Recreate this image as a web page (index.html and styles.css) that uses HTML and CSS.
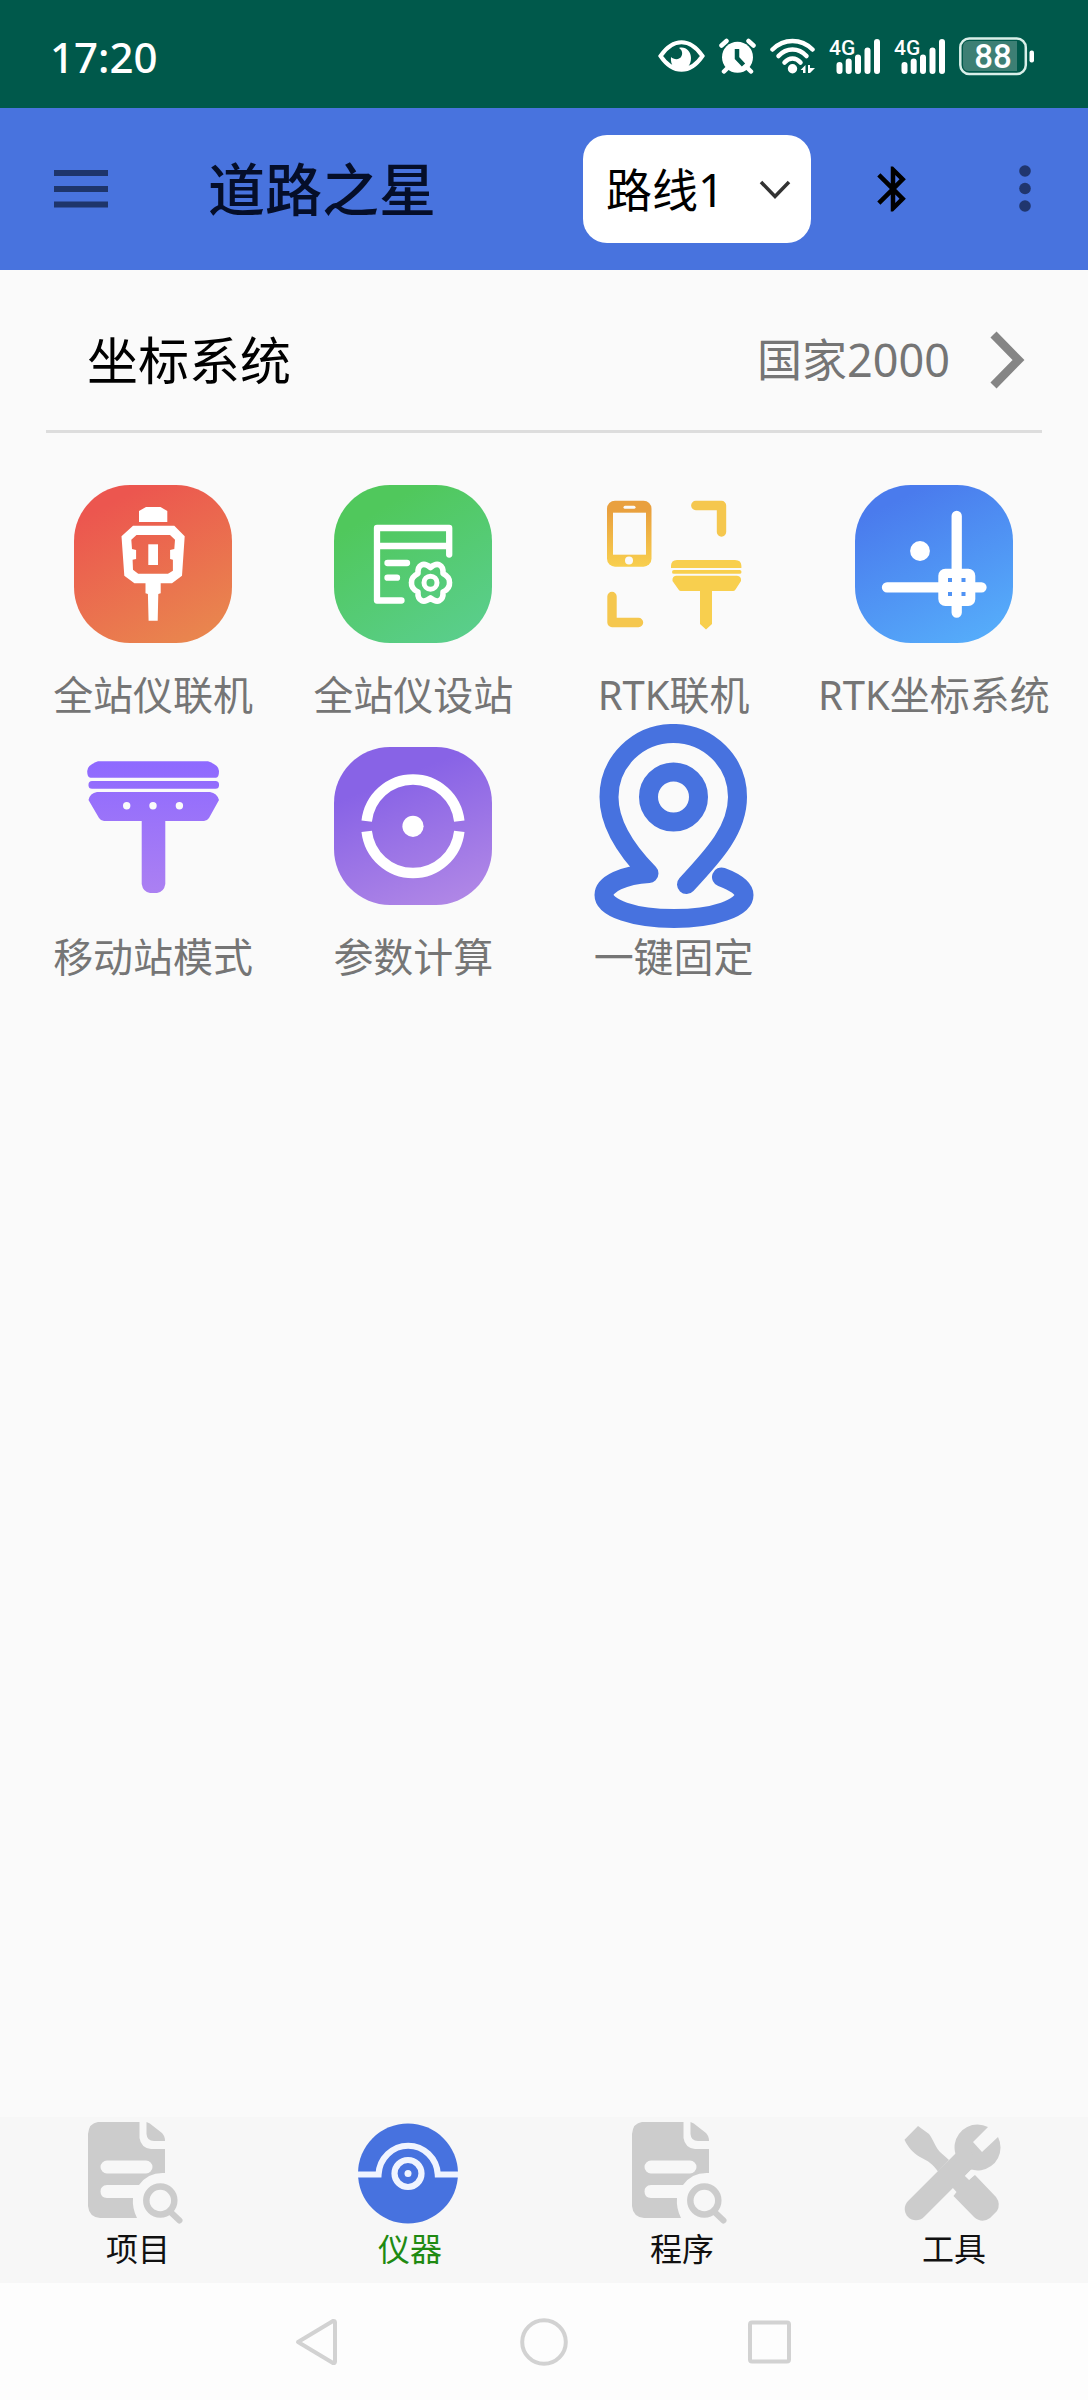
FILE: index.html
```html
<!DOCTYPE html>
<html lang="zh-CN">
<head>
  <meta charset="UTF-8" />
  <title>道路之星</title>
  <meta name="viewport" content="width=device-width, initial-scale=1.0" />
  <link rel="stylesheet" href="styles.css">
</head>
<body>

<!-- Status bar -->
<div class="status-bar">
  <span class="clock">17:20</span>
  <div class="status-icons">
    <svg width="47" height="40" viewBox="0 0 47 40">
      <path d="M2.5 20C8 12 15 6.300 23.500 6.300S39 12 44.500 20C39 28 32 33.700 23.500 33.700S8 28 2.500 20Z" fill="none" stroke="#fff" stroke-width="4"/>
      <path d="M21 12C27 10 33 15 33 22C33 29 29 34 23 34C17 34 12 29 13 21C16 24 22 24 23.500 20C25 17 24 14 21 12Z" fill="#fff"/>
    </svg>
    <svg width="37" height="40" viewBox="0 0 37 40">
      <circle cx="18.500" cy="21.300" r="15.500" fill="#fff"/>
      <path d="M2.500 9.500L7.500 5M29.500 5L34.500 9.500M5 35.500L9 31.500M32 35.500L28 31.500" fill="none" stroke="#fff" stroke-width="4.500" stroke-linecap="round"/>
      <path d="M18 13V22L24.500 29" fill="none" stroke="#00594b" stroke-width="4.500"/>
    </svg>
    <svg width="45" height="40" viewBox="0 0 45 40">
      <g fill="none" stroke="#fff" stroke-width="4.500" stroke-linecap="round">
        <path d="M2.500 13.500Q11 5 22.500 5T42.500 13.500"/>
        <path d="M8.500 20Q14.500 13.500 22.500 13.500T36.500 20"/>
        <path d="M14.500 26.500Q18 22.500 22.500 22.500T30.500 26.500"/>
      </g>
      <circle cx="22.500" cy="32.700" r="4.700" fill="#fff"/>
      <path d="M30.500 34L35.500 29V37H33V34ZM38 29H40V32L45 32L40 37H38Z" fill="#fff"/>
    </svg>
    <svg width="51" height="40" viewBox="0 0 51 40">
      <text class="net-text" x="0" y="19">4G</text>
      <path class="bars" d="M10.500 29V35M19.700 25.500V35M29 21.500V35M38.500 14.500V35M48 6V35"/>
    </svg>
    <svg width="51" height="40" viewBox="0 0 51 40">
      <text class="net-text" x="0" y="19">4G</text>
      <path class="bars" d="M10.500 29V35M19.700 25.500V35M29 21.500V35M38.500 14.500V35M48 6V35"/>
    </svg>
    <svg width="75" height="40" viewBox="0 0 75 40">
      <path d="M10 5H58V35H10Q4 35 4 29V11Q4 5 10 5Z" fill="#3d7f74"/>
      <rect x="1.300" y="2.500" width="65.500" height="35.500" rx="9" fill="none" stroke="#d9efe9" stroke-width="2.500"/>
      <rect x="70.500" y="14.500" width="4.500" height="12" rx="2" fill="#fff"/>
      <text class="battery-text" x="34" y="32" text-anchor="middle">88</text>
    </svg>
  </div>
</div>

<!-- App bar -->
<header class="app-bar">
  <button class="icon-btn" aria-label="菜单">
    <svg width="54" height="38" viewBox="0 0 54 38">
      <path d="M0 3H54M0 19H54M0 34.500H54" stroke="#1e356b" stroke-width="6"/>
    </svg>
  </button>
  <h1 class="app-title">道路之星</h1>
  <div class="route">
    <select class="route-select" aria-label="路线">
      <option>路线1</option>
    </select>
    <svg class="route-arrow" width="32" height="20" viewBox="0 0 32 20">
      <path d="M2 2L16 16.500L30 2" fill="none" stroke="#333" stroke-width="3.500"/>
    </svg>
  </div>
  <button class="icon-btn" aria-label="蓝牙">
    <svg width="54" height="54" viewBox="0 0 24 24">
      <path d="M17.71 7.71L12 2h-1v7.59L6.41 5 5 6.41 10.59 12 5 17.59 6.41 19 11 14.410V22h1l5.710-5.710-4.300-4.290 4.300-4.290zM13 5.830l1.880 1.880L13 9.590V5.830zm1.880 10.460L13 18.170v-3.760l1.880 1.880z"/>
    </svg>
  </button>
  <button class="icon-btn more-btn" aria-label="更多">
    <svg width="12" height="48" viewBox="0 0 12 48">
      <g fill="#20366e">
        <circle cx="6" cy="6" r="5.800"/>
        <circle cx="6" cy="23.500" r="5.800"/>
        <circle cx="6" cy="41" r="5.800"/>
      </g>
    </svg>
  </button>
</header>

<main class="content">
  <a class="coord-row" href="#">
    <span class="coord-name">坐标系统</span>
    <span class="coord-value">国家2000</span>
    <svg width="36" height="58" viewBox="0 0 36 58">
      <path d="M3.500 3.500L28.500 29L3.500 54.500" fill="none" stroke="#858585" stroke-width="8.500"/>
    </svg>
  </a>

  <div class="grid">
    <a class="cell" href="#">
      <span class="cell-icon">
        <svg width="158" height="158" viewBox="0 0 158 158">
          <defs>
            <linearGradient id="red" x1="0.200" y1="0" x2="0.700" y2="1"><stop offset="0.100" stop-color="#ec564f"/><stop offset="1" stop-color="#e9854e"/></linearGradient>
          </defs>
          <rect width="158" height="158" rx="56" fill="url(#red)"/>
          <path fill="#fff" d="M65 37V26L72 22H86.500L93.300 26V37Z"/>
          <path fill="#fff" fill-rule="evenodd" d="M59 40.700H100.300L110.700 51.300L108 90.700L98 98.300H86.700V108.300L84.300 109L83.700 135.700H74.600L73.900 109L71.500 108.300V98.300H60.400L50.300 90.700L47.500 51.300ZM62.500 50L57.300 54.700L58 64L62.100 65V74L58.600 74.700L59 84.700L64.200 88.700H94L98.900 85.700V74.700L96.100 74V65L100.300 64L101 54.700L96 50Z"/>
          <rect x="74.300" y="59.300" width="9.700" height="20.700" fill="#fff"/>
        </svg>
      </span>
      <span class="cell-label">全站仪联机</span>
    </a>
    <a class="cell" href="#">
      <span class="cell-icon">
        <svg width="158" height="158" viewBox="0 0 158 158">
          <defs>
            <linearGradient id="green" x1="0.200" y1="0" x2="0.800" y2="1"><stop offset="0.150" stop-color="#50c85c"/><stop offset="1" stop-color="#5ace8c"/></linearGradient>
          </defs>
          <rect width="158" height="158" rx="56" fill="url(#green)"/>
          <g fill="none" stroke="#fff" stroke-width="6.300" stroke-linecap="round" stroke-linejoin="round">
            <path d="M67.500 115.500H43V43H115.200V69.500M43 61H115M53.500 78H73M53.500 92.700H63"/>
            <path stroke-width="5.600" d="M96.500 82.500Q102 78 105.500 80Q109.500 82 109 88.500Q116 92 115.500 97.700Q116 103.500 109 107Q109.500 113.500 105.500 115.500Q102 117.500 96.500 113Q91 117.500 87.500 115.500Q83.500 113.500 84 107Q77 103.500 77.500 97.700Q77 92 84 88.500Q83.500 82 87.500 80Q91 78 96.500 82.500Z"/>
            <circle cx="96.500" cy="97.700" r="6.500" stroke-width="5"/>
          </g>
        </svg>
      </span>
      <span class="cell-label">全站仪设站</span>
    </a>
    <a class="cell" href="#">
      <span class="cell-icon">
        <svg width="158" height="158" viewBox="0 0 158 158">
          <defs>
            <linearGradient id="amber" x1="0" y1="0" x2="0" y2="1"><stop offset="0.150" stop-color="#e9a03e"/><stop offset="1" stop-color="#f8cf4e"/></linearGradient>
          </defs>
          <rect x="12" y="15.700" width="44.500" height="66" rx="8" fill="url(#amber)"/>
          <rect x="18" y="27.700" width="33" height="42" fill="#fafafa"/>
          <rect x="28.500" y="20.800" width="12" height="3" rx="1.500" fill="#fafafa"/>
          <circle cx="34" cy="75.500" r="4" fill="#fafafa"/>
          <path d="M100.800 20.500H126.500V47M17 111.500V137.500H43.500" fill="none" stroke="#f5c74e" stroke-width="9.400" stroke-linecap="round" stroke-linejoin="round"/>
          <g fill="#f8cf4e">
            <path d="M82 75H140Q146.400 75 146.400 81V83H76V81Q76 75 82 75Z"/>
            <rect x="77" y="85" width="69.500" height="3.800" rx="1.900"/>
            <path d="M81 90.700H142Q146.500 91 146 96L140.500 104.500Q139.500 106 138 106H117V139L111 144.500L105 139V106H86Q84.500 106 83.500 104.500L77.500 96Q77 91 81 90.700Z"/>
          </g>
        </svg>
      </span>
      <span class="cell-label">RTK联机</span>
    </a>
    <a class="cell" href="#">
      <span class="cell-icon">
        <svg width="158" height="158" viewBox="0 0 158 158">
          <defs>
            <linearGradient id="blue" x1="0.200" y1="0" x2="0.700" y2="1"><stop offset="0.100" stop-color="#4a7bed"/><stop offset="1" stop-color="#55abfa"/></linearGradient>
          </defs>
          <rect width="158" height="158" rx="56" fill="url(#blue)"/>
          <path d="M101.700 31V127.500M32 102.300H126.500" stroke="#fff" stroke-width="10.300" stroke-linecap="round"/>
          <circle cx="65" cy="66" r="9.900" fill="#fff"/>
          <rect x="83.300" y="83.700" width="37" height="37.300" rx="7" fill="#fff"/>
          <path d="M93 93h4v4h-4zM106.500 93h4v4h-4zM93 107h4v4h-4zM106.500 107h4v4h-4z" fill="#4f92f4"/>
        </svg>
      </span>
      <span class="cell-label">RTK坐标系统</span>
    </a>
    <a class="cell" href="#">
      <span class="cell-icon">
        <svg width="158" height="158" viewBox="0 0 158 158">
          <defs>
            <linearGradient id="violet" gradientUnits="userSpaceOnUse" x1="0" y1="14" x2="0" y2="146"><stop offset="0" stop-color="#8e69ff"/><stop offset="1" stop-color="#ab80f2"/></linearGradient>
          </defs>
          <g fill="url(#violet)">
            <path d="M24 14.300H134Q145 18 145 24Q145 30.700 142 30.700H16.500Q13.200 30.700 13.200 24Q13.200 18 24 14.300Z"/>
            <rect x="14.500" y="34" width="130.500" height="7.700" rx="3.500"/>
            <path fill-rule="evenodd" d="M23 45H136Q143 46 145 53L135 71Q133 74 130 74H91.300V137Q90 145 83 146H76Q69 145 67.700 137V74H30Q27 74 25 71L14.500 53Q16 46 23 45ZM49 58.700a3.700 3.700 0 1 0 7.400 0a3.700 3.700 0 1 0-7.400 0ZM75.300 58.700a3.700 3.700 0 1 0 7.400 0a3.700 3.700 0 1 0-7.400 0ZM101.700 58.700a3.700 3.700 0 1 0 7.400 0a3.700 3.700 0 1 0-7.400 0Z"/>
          </g>
        </svg>
      </span>
      <span class="cell-label">移动站模式</span>
    </a>
    <a class="cell" href="#">
      <span class="cell-icon">
        <svg width="158" height="158" viewBox="0 0 158 158">
          <defs>
            <linearGradient id="purple" x1="0.300" y1="0" x2="0.700" y2="1"><stop offset="0.200" stop-color="#8863e6"/><stop offset="1" stop-color="#af86e6"/></linearGradient>
          </defs>
          <rect width="158" height="158" rx="56" fill="url(#purple)"/>
          <path d="M32.700 74.200A46.600 47 0 0 1 125.300 74.200M32.700 84.400A46.600 47 0 0 0 125.300 84.400" fill="none" stroke="#fff" stroke-width="10.500"/>
          <circle cx="79" cy="79.300" r="10.600" fill="#fff"/>
        </svg>
      </span>
      <span class="cell-label">参数计算</span>
    </a>
    <a class="cell" href="#">
      <span class="cell-icon">
        <svg width="160" height="204" viewBox="0 0 160 204">
          <g fill="none" stroke="#4772df" stroke-width="19" stroke-linecap="round" stroke-linejoin="round">
            <path d="M92.500 160.500C121 130 143.500 105 143.500 73A64.200 63.500 0 0 0 15 73C15 100 31 125 55 149.500C30 151 10 160 10 171C10 184 40 194.500 80 194.500S150 184 150 171C150 164 141 158 127.500 153"/>
            <circle cx="79.500" cy="73" r="25"/>
          </g>
        </svg>
      </span>
      <span class="cell-label">一键固定</span>
    </a>
  </div>
</main>

<!-- Tabs -->
<nav class="tabs">
  <a class="tab" href="#">
    <svg width="100" height="104" viewBox="0 0 100 104">
      <path d="M12 0H53.500V16Q55 26 65 27H79V51Q62 50 53 63H21Q14.500 63.500 14.500 69.500T21 76H47Q46 86 51 96H14Q3 95 2 84V12Q3 1 12 0ZM21 38.500A6.500 6.500 0 0 0 21 51.500H60A6.500 6.500 0 0 0 60 38.500Z" fill="#ccc"/>
      <path d="M60.500 0Q64 1 67 4L76 11Q79 14 79 19H68Q61 19 60.500 12Z" fill="#ccc"/>
      <circle cx="74.300" cy="78.500" r="14" fill="none" stroke="#ccc" stroke-width="6.500"/>
      <path d="M84.500 90L93.500 98.500" stroke="#ccc" stroke-width="6" stroke-linecap="round"/>
    </svg>
    <span class="tab-label">项目</span>
  </a>
  <a class="tab active" href="#">
    <svg width="100" height="104" viewBox="0 0 100 104">
      <circle cx="50" cy="51.500" r="50" fill="#4772df"/>
      <g fill="none" stroke="#f0f4ff" stroke-width="6.200">
        <path d="M0 52.500H20.500A29.700 30.500 0 0 1 79.800 52.500H100"/>
        <circle cx="50" cy="51.500" r="13.500"/>
      </g>
      <circle cx="50" cy="51.500" r="3.500" fill="#f0f4ff"/>
    </svg>
    <span class="tab-label">仪器</span>
  </a>
  <a class="tab" href="#">
    <svg width="100" height="104" viewBox="0 0 100 104">
      <path d="M12 0H53.500V16Q55 26 65 27H79V51Q62 50 53 63H21Q14.500 63.500 14.500 69.500T21 76H47Q46 86 51 96H14Q3 95 2 84V12Q3 1 12 0ZM21 38.500A6.500 6.500 0 0 0 21 51.500H60A6.500 6.500 0 0 0 60 38.500Z" fill="#ccc"/>
      <path d="M60.500 0Q64 1 67 4L76 11Q79 14 79 19H68Q61 19 60.500 12Z" fill="#ccc"/>
      <circle cx="74.300" cy="78.500" r="14" fill="none" stroke="#ccc" stroke-width="6.500"/>
      <path d="M84.500 90L93.500 98.500" stroke="#ccc" stroke-width="6" stroke-linecap="round"/>
    </svg>
    <span class="tab-label">程序</span>
  </a>
  <a class="tab" href="#">
    <svg width="100" height="104" viewBox="0 -1 100 104">
      <g fill="#ccc">
        <path d="M16 3L27 11C32 18 34 25 38 29L47 37L36 48.500C31 41 26 38 18 34C10 29 6 24 2.500 16.700Z"/>
        <path d="M45 45L62 51L67 56.500L73 52L94 74Q99 81 95 88L88 95Q80 101 72 94L51.500 73L54.500 69L50 64Z"/>
        <path d="M86 4A23 23 0 1 0 96 14L80 29L71 19Z"/>
      </g>
      <path d="M14 86L62 38" stroke="#ccc" stroke-width="22.500" stroke-linecap="round"/>
      <path d="M65 55L71 49" stroke="#f7f7f7" stroke-width="6"/>
    </svg>
    <span class="tab-label">工具</span>
  </a>
</nav>

<!-- System navigation -->
<div class="system-nav">
  <button class="icon-btn" aria-label="返回">
    <svg width="48" height="48" viewBox="0 0 48 48">
      <path d="M4 24L39 3Q41 2.500 41 4.500V43.500Q41 45.500 39 45Z" fill="none" stroke="#d2d2d2" stroke-width="4" stroke-linejoin="round"/>
    </svg>
  </button>
  <button class="icon-btn" aria-label="主页">
    <svg width="48" height="48" viewBox="0 0 48 48">
      <circle cx="24" cy="24" r="21.800" fill="none" stroke="#d2d2d2" stroke-width="4"/>
    </svg>
  </button>
  <button class="icon-btn" aria-label="最近任务">
    <svg width="48" height="48" viewBox="0 0 48 48">
      <rect x="4" y="4.500" width="39" height="39" rx="2" fill="none" stroke="#d2d2d2" stroke-width="4"/>
    </svg>
  </button>
</div>

</body>
</html>
```
FILE: styles.css
```css
html, body {
  margin: 0;
  padding: 0;
}

body {
  min-height: 100vh;
  display: flex;
  flex-direction: column;
  font-family: "Noto Sans", "Noto Sans CJK SC", sans-serif;
  background: #fafafa;
  color: #000;
}

a {
  color: inherit;
  text-decoration: none;
}

svg {
  display: block;
  flex-shrink: 0;
}

.icon-btn {
  padding: 0;
  border: none;
  background: none;
  cursor: pointer;
}

/* status bar */
.status-bar {
  height: 104px;
  padding: 4px 54px 0 50px;
  display: flex;
  align-items: center;
  justify-content: space-between;
  background: #00594b;
  color: #fff;
}

.clock {
  font-size: 42px;
  font-weight: 500;
}

.status-icons {
  display: flex;
  align-items: center;
  gap: 14px;
}

.net-text {
  font-family: Roboto, sans-serif;
  font-size: 21px;
  font-weight: 500;
  fill: #fff;
}

.bars {
  fill: none;
  stroke: #fff;
  stroke-width: 6;
  stroke-linecap: round;
}

.battery-text {
  font-family: Roboto, sans-serif;
  font-size: 33px;
  font-weight: 500;
  fill: #fff;
}

/* app bar */
.app-bar {
  height: 162px;
  padding: 0 57px 0 54px;
  display: flex;
  align-items: center;
  background: #4873de;
}

.app-title {
  flex: 1;
  margin: 0 0 0 100px;
  font-size: 57px;
  font-weight: 500;
  line-height: 80px;
  color: #050e29;
}

.route {
  position: relative;
  margin-right: 55px;
}

.route-select {
  display: block;
  width: 228px;
  height: 108px;
  padding: 0 56px 0 23px;
  border: none;
  border-radius: 24px;
  appearance: none;
  background: #fff;
  color: #000;
  font-family: inherit;
  font-size: 46px;
}

.route-arrow {
  position: absolute;
  right: 20px;
  top: 45px;
  pointer-events: none;
}

.more-btn {
  margin-left: 99px;
}

/* content */
.content {
  flex: 1;
}

.coord-row {
  height: 140px;
  margin: 0 46px;
  padding: 20px 16px 0 41px;
  display: flex;
  align-items: center;
  border-bottom: 3px solid #ddd;
}

.coord-name {
  flex: 1;
  font-size: 51px;
  line-height: 72px;
}

.coord-value {
  margin-right: 40px;
  font-size: 45px;
  line-height: 72px;
  color: #757575;
}

.grid {
  display: grid;
  grid-template-columns: repeat(4, 1fr);
  padding: 29px 24px 29px 23px;
}

.cell {
  display: flex;
  flex-direction: column;
  align-items: center;
}

.cell-icon {
  height: 204px;
  display: flex;
  align-items: center;
}

.cell-label {
  font-size: 40px;
  line-height: 58px;
  white-space: nowrap;
  color: #757575;
}

/* bottom tabs */
.tabs {
  height: 161px;
  padding-top: 5px;
  display: flex;
  background: #f7f7f7;
}

.tab {
  flex: 1;
  display: flex;
  flex-direction: column;
  align-items: center;
  font-size: 32px;
  line-height: 46px;
  color: #111;
}

.tab-label {
  padding-left: 4px;
}

.tab.active {
  color: #1f8a12;
}

/* system navigation */
.system-nav {
  height: 117px;
  display: flex;
  align-items: center;
  justify-content: center;
  gap: 178px;
  background: #fdfdfd;
}
```
